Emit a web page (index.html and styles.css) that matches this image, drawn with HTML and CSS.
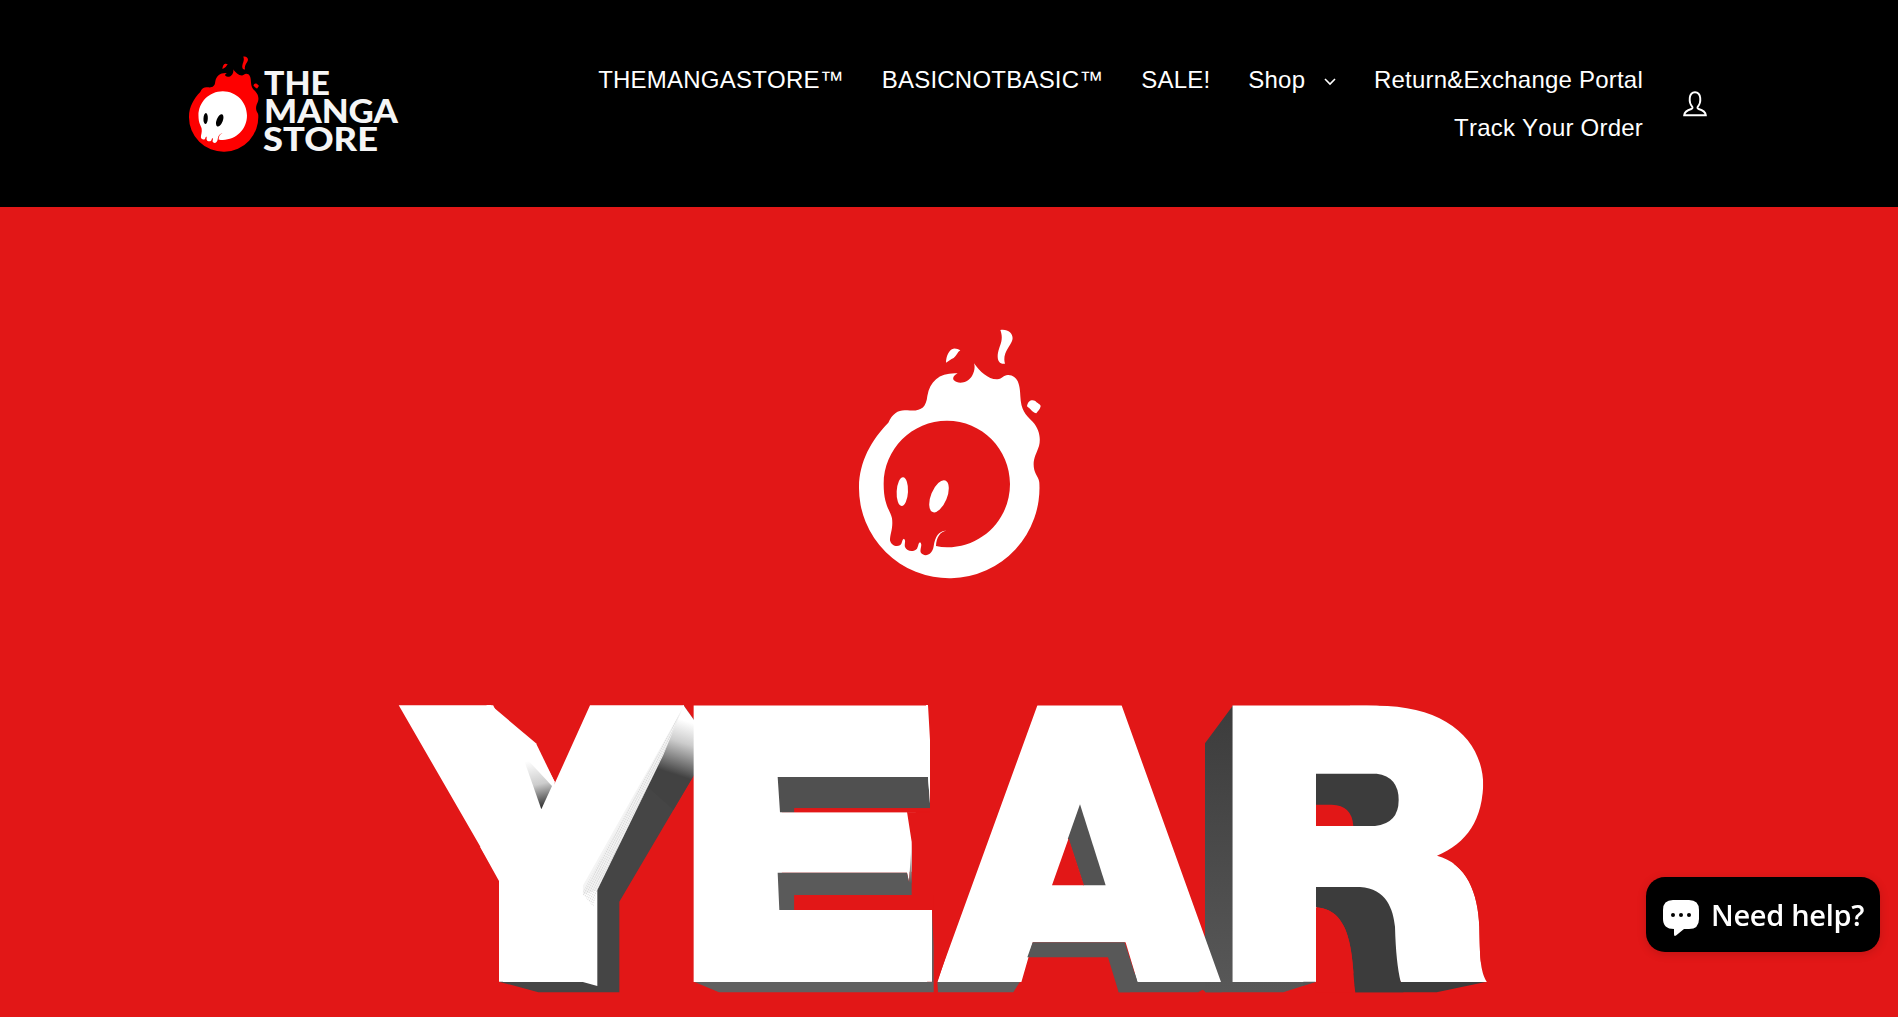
FILE: index.html
```html
<!DOCTYPE html>
<html lang="en">
<head>
<meta charset="utf-8">
<title>The Manga Store</title>
<link rel="stylesheet" href="styles.css">
</head>
<body>
<svg class="defs" aria-hidden="true">
  <defs>
    <g id="flame">
      <path d="M57 530C58 455 94 390 145 338C158 308 178 298 202 301C240 305 258 296 262 258C270 212 300 187 353 190C341 196 337 204 341 210C356 225 384 218 396 198C403 185 406 172 402 160C420 185 445 209 472 208C488 207 490 194 505 195C530 196 540 218 541 258C543 300 555 313 578 335C598 357 603 385 597 408C588 435 576 450 583 480C588 498 597 503 598 518A270.750 270.750 0 1 1 57 530Z"/>
      <path d="M318 158C318 138 328 118 340 116Q352 115 361 121C352 126 350 138 341 144C332 148 326 154 318 158ZM481 60C509 56 523 76 516 93C510 109 486 132 495 161C478 164 470 150 474 128C479 104 492 90 481 60ZM561 289C563 271 577 267 586 273C591 280 602 282 602 289C600 300 593 304 589 310C580 310 573 298 561 289Z"/>
    </g>
    <path id="skull" d="M131 522C131 417 216 332 321 332C426 332 510 417 510 522C510 628 426 712 321 712Q304 712 288 708C289 682 301 664 319 662C297 661 285 680 281 709C276 741 249 740 242 727C239 716 249 704 240 697C234 700 236 708 231 716C221 727 201 725 195 711C192 700 199 693 192 686C184 690 188 700 180 706C169 712 153 706 150 691C150 671 160 655 156 625C151 601 131 587 131 522Z"/>
    <g id="eyes">
      <ellipse cx="187" cy="545" rx="17" ry="43" transform="rotate(3 187 545)"/>
      <ellipse cx="297" cy="559" rx="24" ry="51" transform="rotate(22 297 559)"/>
    </g>
  </defs>
</svg>

<header class="header">
  <a class="logo" href="#" aria-label="The Manga Store">
    <svg viewBox="188 55 212 100" width="212" height="100">
      <g transform="translate(181.7 48.8) scale(.128)">
        <use href="#flame" fill="#fe0000"/>
        <use href="#skull" fill="#fff"/>
        <use href="#eyes" fill="#000"/>
      </g>
      <g class="logo-text">
        <text x="264" y="94.5" textLength="66" lengthAdjust="spacingAndGlyphs">THE</text>
        <text x="264" y="122.900" textLength="134" lengthAdjust="spacingAndGlyphs">MANGA</text>
        <text x="263" y="151" textLength="115" lengthAdjust="spacingAndGlyphs">STORE</text>
      </g>
    </svg>
  </a>
  <nav class="nav">
    <a href="#">THEMANGASTORE™</a>
    <a href="#">BASICNOTBASIC™</a>
    <a href="#">SALE!</a>
    <a href="#">Shop<svg class="chevron" viewBox="0 0 12 8" width="12" height="8"><path d="M1 1l5 5 5-5"/></svg></a>
    <a href="#">Return&amp;Exchange Portal</a>
    <a href="#">Track Your Order</a>
  </nav>
  <a class="account" href="#" aria-label="Account">
    <svg viewBox="0 0 24 26" width="24" height="26"><path d="M1.2 24.2C1.5 20.5 5 19 8.400 18Q10 17.300 9.300 15.900C5.500 11.500 5.500 1.200 12 1.200S18.500 11.500 14.700 15.900Q14 17.300 15.600 18C19 19 22.500 20.500 22.800 24.200Z"/></svg>
  </a>
</header>

<main class="hero">
  <svg viewBox="0 207 1898 810" width="1898" height="810">
    <defs>
      <linearGradient id="side" x1="0" y1="0" x2="0" y2="1"><stop offset="0" stop-color="#3c3c3c"/><stop offset="1" stop-color="#585858"/></linearGradient>
      <linearGradient id="lit" gradientUnits="userSpaceOnUse" x1="940" y1="130" x2="890" y2="285"><stop offset="0" stop-color="#fff"/><stop offset=".4" stop-color="#ccc"/><stop offset="1" stop-color="#424242"/></linearGradient>
      <linearGradient id="notch" gradientUnits="userSpaceOnUse" x1="455" y1="240" x2="490" y2="388"><stop offset="0" stop-color="#fff"/><stop offset=".5" stop-color="#ccc"/><stop offset="1" stop-color="#222"/></linearGradient>
      <linearGradient id="edge" x1="0" y1="0" x2="0" y2="1"><stop offset="0" stop-color="#fff"/><stop offset="1" stop-color="#5a5a5a"/></linearGradient>
      <pattern id="grain" width="6" height="7" patternUnits="userSpaceOnUse" patternTransform="rotate(28)"><path d="M1 0v5" stroke="#bbb" stroke-width="1.500"/></pattern>
      <clipPath id="slope"><path d="M1037.500 700V705L937 982H1221L1121.500 705V700Z"/></clipPath>
    </defs>
    <g transform="translate(840 310) scale(.33333)">
      <use href="#flame" fill="#fff"/>
      <use href="#skull" fill="#e21717"/>
      <use href="#eyes" fill="#fff"/>
    </g>
    <!-- extruded sides behind the letter faces -->
    <g transform="translate(380 680) scale(.33333)">
      <path fill="#fff" d="M320 75H332L468 190L524 305L484 388L300 200Z"/>
      <path fill="#454545" d="M910 75L942 120V285L718 665V937H475L357 905L600 600Z"/>
      <path fill="url(#lit)" d="M910 75L942 120V285L880 390L780 300Z"/>
      <path fill="#fff" d="M590 580L652 630V918L606 905Z"/>
      <path fill="#fff" d="M300 500L357 603V905H420V500Z"/>
      <path fill="#f4f4f4" d="M910 78L850 225L652 630L590 650V600Z"/>
      <path fill="url(#grain)" d="M905 90L850 225L652 630L640 680L606 640Z"/>
    </g>
    <g transform="translate(680 680) scale(.33333)">
      <path fill="#606060" d="M42 905H756V690L761 800V937H117Z"/>
    </g>
    <g transform="translate(920 680) scale(.33333)">
      <path fill="#606060" d="M52 905H300L280 937H54Z"/>
      <path fill="#585858" d="M600 880H905V937H858L848 929L835 937H596Z"/>
    </g>
    <g transform="translate(1190 680) scale(.33333)">
      <path fill="url(#side)" d="M130 75V905H378L280 937H45V190Z"/>
      <path fill="#3c3c3c" d="M600 880L632 905H890L740 937H496L485 880Z"/>
    </g>

    <g class="year">
      <text class="heavy" transform="translate(395.500 979) scale(1.012 1)">Y</text>
      <text transform="translate(672.700 982) scale(1.176 1)">E</text>
      <g clip-path="url(#slope)"><text transform="translate(929 982)">A</text></g>
      <text transform="translate(1212.500 982) scale(1.126 1)">R</text>
    </g>

    <!-- inner walls seen through the openings -->
    <g transform="translate(380 680) scale(.33333)">
      <path fill="#fff" d="M420 230L468 200L524 305L530 430H450Z"/>
      <path fill="url(#notch)" d="M425 220L516 318L484 388Z"/>
    </g>
    <g transform="translate(680 680) scale(.33333)">
      <path fill="#fff" d="M250 230H744L750 370H744V291H250ZM250 397H681L695 490L687 606L681 578H250ZM250 690H756V905H250Z"/>
      <path fill="#505050" d="M293 291H744L750 370V385H343V397H300Z"/>
      <path fill="#e21717" d="M343 385H750V397H343ZM681 395L695 485V650H750V395Z"/>
      <path fill="#5a5a5a" d="M293 578H681L687 606L695 600V645H343V690H298Z"/>
      <path fill="url(#edge)" d="M695 485V610L687 606Z"/>
      <path fill="#e21717" d="M343 645H760V690H343Z"/>
      <path fill="#fff" d="M744 75L750 180V370L744 291L738 285V75Z"/>
    </g>
    <g transform="translate(920 680) scale(.33333)">
      <path fill="#fff" d="M450 220H510L610 640V700H360V620ZM336 740H616L640 787H320Z"/>
      <path fill="#535353" d="M480 373L557 616H490L444 475Z"/>
      <path fill="#e21717" d="M446 475L492 616H396Z"/>
      <path fill="#585858" d="M338 787H614L652 905L630 937H596L564 832H322Z"/>
    </g>
    <g transform="translate(1190 680) scale(.33333)">
      <path fill="#fff" d="M480 77H560C770 77 880 180 880 320C878 420 830 490 741 527C830 550 865 640 868 740C870 830 870 870 890 905H640L600 620L350 640V440L360 240H480Z"/>
      <path fill="#fff" d="M350 240H600L660 300V470L600 620H350Z"/>
      <path fill="#3c3c3c" d="M378 281H560Q626 290 626 360T555 438H378ZM378 621H510C590 625 610 690 615 740Q618 850 632 905L640 937H496C485 840 492 690 378 682Z"/>
      <path fill="#e21717" d="M378 374H425Q486 375 490 438H378ZM378 682C492 690 485 840 496 937H378Z"/>
      <path fill="#e21717" d="M960 300H880C880 420 830 490 741 527C830 550 865 640 868 740C870 830 870 870 890 905L894 912H960Z"/>
      <path fill="#555" d="M340 905H378L340 917Z"/>
    </g>
  </svg>
</main>

<button class="help">
  <svg viewBox="0 0 36 36" width="36" height="36"><path fill="#fff" d="M10 0H26Q36 0 36 10V19Q36 29 26 29H21L13 35.500Q11 36.800 11 34V29Q0 29 0 19V10Q0 0 10 0Z"/><circle cx="10" cy="15" r="2"/><circle cx="18" cy="15" r="2"/><circle cx="26" cy="15" r="2"/></svg>
  <span>Need help?</span>
</button>
</body>
</html>
```
FILE: styles.css
```css
* { box-sizing: border-box; }
body {
  margin: 0;
  height: 1017px;
  overflow: hidden;
  background: #e21717;
  font-family: "Liberation Sans", Arial, sans-serif;
}
a { color: inherit; text-decoration: none; }
.defs { display: block; width: 0; height: 0; }
.header {
  display: flex;
  align-items: center;
  height: 207px;
  padding: 0 191px 0 188px;
  background: #000;
  color: #fff;
}
.logo { display: block; height: 100px; margin-top: 3px; }
.logo-text { fill: #f5f5f5; font: 900 32px Lato, sans-serif; }
.nav {
  flex: 1;
  display: flex;
  flex-wrap: wrap;
  justify-content: flex-end;
  column-gap: 37.800px;
  font-size: 24px;
  line-height: 48px;
  letter-spacing: .22px;
  font-kerning: none;
}
.chevron { margin-left: 19px; vertical-align: 2px; fill: none; stroke: #fff; stroke-width: 1.600; }
.account { display: flex; margin-left: 40px; }
.account svg { fill: none; stroke: #fff; stroke-width: 1.900; }
.hero { height: 810px; background: #e21717; }
.hero > svg { display: block; }
.year { fill: #fff; font: 900 380px Inter, sans-serif; }
.year .heavy { font-size: 372px; stroke: #fff; stroke-width: 6px; }
.help {
  position: fixed;
  right: 18px;
  bottom: 65px;
  display: flex;
  align-items: center;
  gap: 12px;
  width: 234px;
  height: 75px;
  padding: 0 0 0 17px;
  border: 0;
  border-radius: 19px;
  background: #000;
  color: #fff;
  font: 600 29px "Open Sans", "Noto Sans", sans-serif;
  letter-spacing: -.3px;
  white-space: nowrap;
  box-shadow: 0 2px 10px rgba(0, 0, 0, .15);
}
.help svg { margin-top: 7px; }
```
